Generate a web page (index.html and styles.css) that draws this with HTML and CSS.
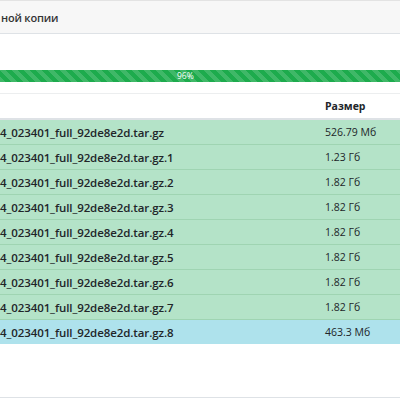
FILE: index.html
```html
<!DOCTYPE html>
<html lang="ru">
<head>
<meta charset="utf-8">
<link rel="stylesheet" href="styles.css">
</head>
<body>
<div class="modal">
  <div class="modal-header">
    <h5 class="title">ной копии</h5>
  </div>
  <div class="modal-body">
    <div class="progress">
      <div class="progress-bar"><span class="label">96%</span></div>
    </div>
    <table class="files">
      <thead>
        <tr><th class="name">&nbsp;</th><th class="size">Размер</th></tr>
      </thead>
      <tbody>
        <tr class="ok"><td class="name">4_023401_full_92de8e2d.tar.gz</td><td class="size">526.79 Мб</td></tr>
        <tr class="ok"><td class="name">4_023401_full_92de8e2d.tar.gz.1</td><td class="size">1.23 Гб</td></tr>
        <tr class="ok"><td class="name">4_023401_full_92de8e2d.tar.gz.2</td><td class="size">1.82 Гб</td></tr>
        <tr class="ok"><td class="name">4_023401_full_92de8e2d.tar.gz.3</td><td class="size">1.82 Гб</td></tr>
        <tr class="ok"><td class="name">4_023401_full_92de8e2d.tar.gz.4</td><td class="size">1.82 Гб</td></tr>
        <tr class="ok"><td class="name">4_023401_full_92de8e2d.tar.gz.5</td><td class="size">1.82 Гб</td></tr>
        <tr class="ok"><td class="name">4_023401_full_92de8e2d.tar.gz.6</td><td class="size">1.82 Гб</td></tr>
        <tr class="ok"><td class="name">4_023401_full_92de8e2d.tar.gz.7</td><td class="size">1.82 Гб</td></tr>
        <tr class="info"><td class="name">4_023401_full_92de8e2d.tar.gz.8</td><td class="size">463.3 Мб</td></tr>
      </tbody>
    </table>
  </div>
  <div class="modal-footer"></div>
</div>
</body>
</html>
```

FILE: styles.css
```css
html, body {
  margin: 0;
  padding: 0;
  background: #ffffff;
  width: 400px;
  height: 400px;
  overflow: hidden;
}
body {
  font-family: "Open Sans", "Noto Sans", sans-serif;
  color: #212529;
}
.modal {
  display: flex;
  flex-direction: column;
  height: 400px;
}
.modal-header {
  height: 34px;
  box-sizing: border-box;
  background: #f7f7f7;
  border-top: 1px solid #e3e3e3;
  border-bottom: 1px solid #dee2e6;
  display: flex;
  align-items: center;
}
.title {
  margin: 0;
  padding-left: 1px;
  font-size: 11px;
  letter-spacing: -0.2px;
  font-weight: 600;
  color: #333;
}
.modal-body {
  flex: 1;
  padding-top: 36px;
}
.progress {
  height: 12px;
  background: #e9ecef;
  display: flex;
}
.progress-bar {
  flex: 1;
  background-color: #1dab4d;
  background-image: linear-gradient(45deg, rgba(255,255,255,.15) 25%, transparent 25%, transparent 50%, rgba(255,255,255,.15) 50%, rgba(255,255,255,.15) 75%, transparent 75%, transparent);
  background-size: 12px 12px;
  display: flex;
  align-items: center;
}
.label {
  margin-left: 177px;
  font-size: 8.5px;
  color: #fff;
  line-height: 12px;
}
.files {
  margin-top: 11px;
  width: 100%;
  border-collapse: collapse;
  font-size: 11.5px;
}
.files th, .files td {
  height: 24px;
  padding: 0;
  text-align: left;
  vertical-align: middle;
}
.files thead th {
  border-top: 1px solid #eceeef;
  border-bottom: 2px solid #dee2e6;
  font-weight: 700;
}
.files .size {
  width: 75px;
  font-size: 10.5px;
}
.files td.name {
  font-weight: 600;
  letter-spacing: -0.1px;
}
.files tbody td {
  border-top: 1px solid #9fd4b2;
}
.ok td {
  background: #b4e3c8;
}
.info td {
  background: #aee2ec;
  border-top-color: #8fd0dc;
}
.modal-footer {
  height: 2px;
  border-top: 1px solid #dee2e6;
}
```
